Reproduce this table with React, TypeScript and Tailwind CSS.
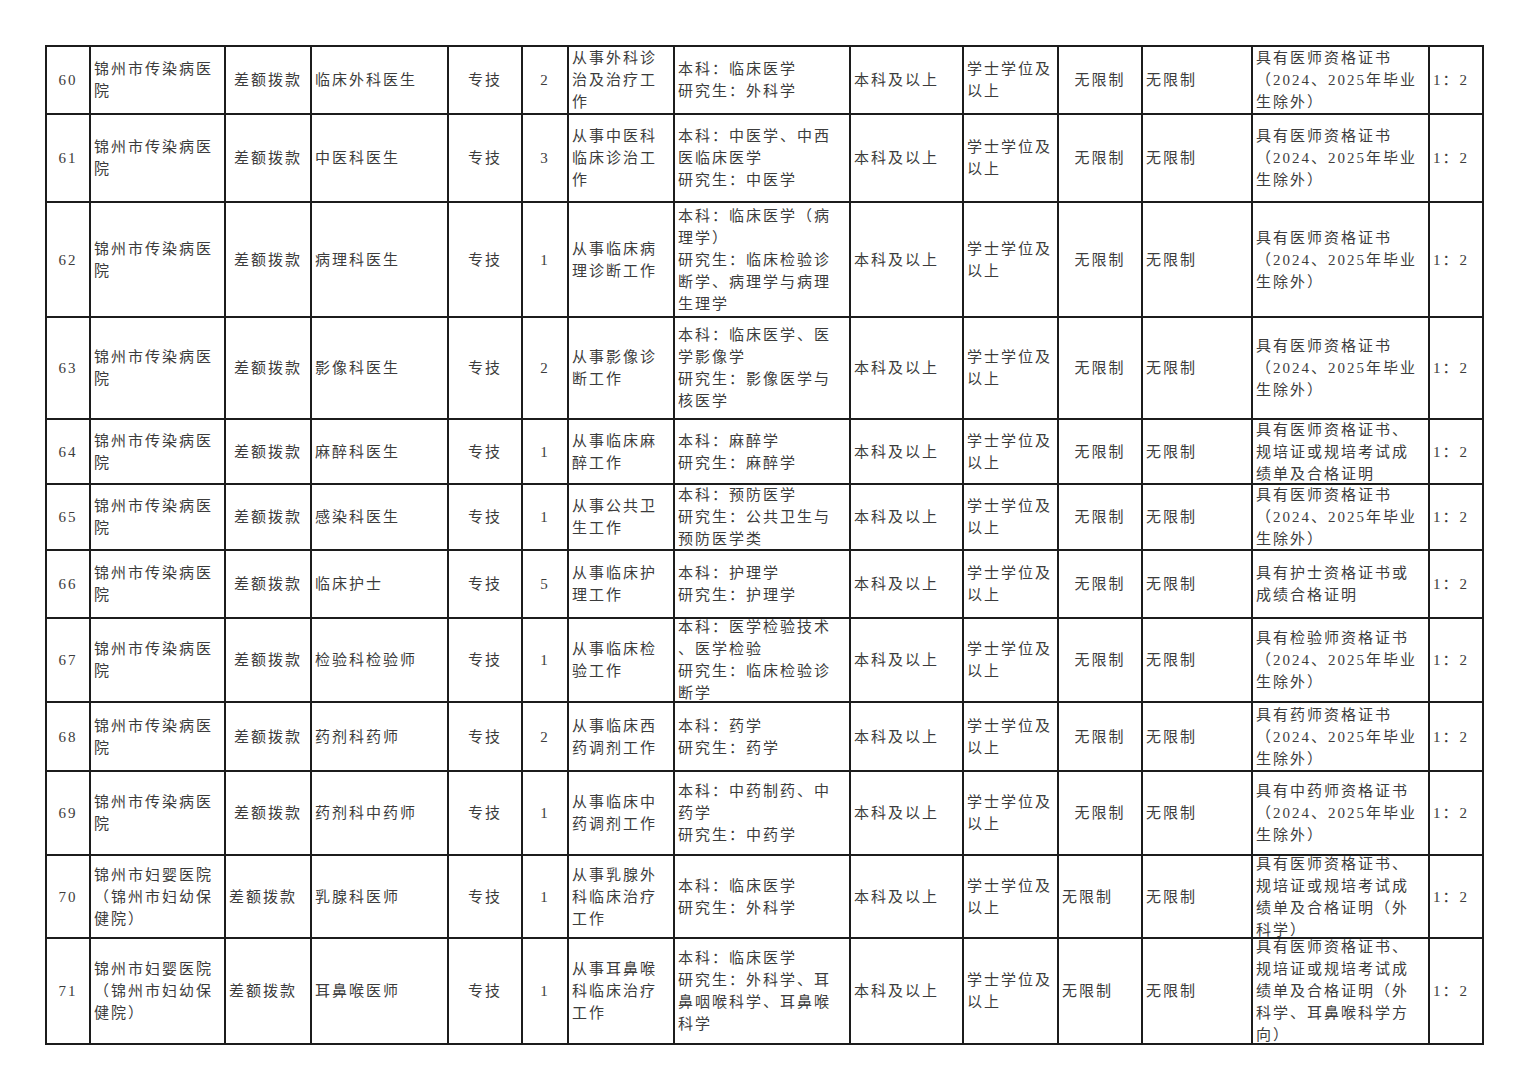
import React from 'react';

type Align = 'left' | 'center';

const colWidths = [42, 135, 86, 137, 74, 46, 106, 176, 113, 95, 84, 110, 177, 54];
const colAlign: Align[] = ['center', 'left', 'center', 'left', 'center', 'center', 'left', 'left', 'left', 'left', 'center', 'left', 'left', 'left'];

const HOSP = ['锦州市传染病医', '院'];
const HOSP2 = ['锦州市妇婴医院', '（锦州市妇幼保', '健院）'];
const DEG = ['学士学位及', '以上'];
const CERT = ['具有医师资格证书', '（2024、2025年毕业', '生除外）'];

interface Row {
  h: number;
  cells: string[][];
  leftCols?: number[];
}

const rows: Row[] = [
  {
    h: 66,
    cells: [['60'], HOSP, ['差额拨款'], ['临床外科医生'], ['专技'], ['2'], ['从事外科诊', '治及治疗工', '作'], ['本科：临床医学', '研究生：外科学'], ['本科及以上'], DEG, ['无限制'], ['无限制'], CERT, ['1：2']],
  },
  {
    h: 88,
    cells: [['61'], HOSP, ['差额拨款'], ['中医科医生'], ['专技'], ['3'], ['从事中医科', '临床诊治工', '作'], ['本科：中医学、中西', '医临床医学', '研究生：中医学'], ['本科及以上'], DEG, ['无限制'], ['无限制'], CERT, ['1：2']],
  },
  {
    h: 115,
    cells: [['62'], HOSP, ['差额拨款'], ['病理科医生'], ['专技'], ['1'], ['从事临床病', '理诊断工作'], ['本科：临床医学（病', '理学）', '研究生：临床检验诊', '断学、病理学与病理', '生理学'], ['本科及以上'], DEG, ['无限制'], ['无限制'], CERT, ['1：2']],
  },
  {
    h: 102,
    cells: [['63'], HOSP, ['差额拨款'], ['影像科医生'], ['专技'], ['2'], ['从事影像诊', '断工作'], ['本科：临床医学、医', '学影像学', '研究生：影像医学与', '核医学'], ['本科及以上'], DEG, ['无限制'], ['无限制'], CERT, ['1：2']],
  },
  {
    h: 65,
    cells: [['64'], HOSP, ['差额拨款'], ['麻醉科医生'], ['专技'], ['1'], ['从事临床麻', '醉工作'], ['本科：麻醉学', '研究生：麻醉学'], ['本科及以上'], DEG, ['无限制'], ['无限制'], ['具有医师资格证书、', '规培证或规培考试成', '绩单及合格证明'], ['1：2']],
  },
  {
    h: 66,
    cells: [['65'], HOSP, ['差额拨款'], ['感染科医生'], ['专技'], ['1'], ['从事公共卫', '生工作'], ['本科：预防医学', '研究生：公共卫生与', '预防医学类'], ['本科及以上'], DEG, ['无限制'], ['无限制'], CERT, ['1：2']],
  },
  {
    h: 68,
    cells: [['66'], HOSP, ['差额拨款'], ['临床护士'], ['专技'], ['5'], ['从事临床护', '理工作'], ['本科：护理学', '研究生：护理学'], ['本科及以上'], DEG, ['无限制'], ['无限制'], ['具有护士资格证书或', '成绩合格证明'], ['1：2']],
  },
  {
    h: 84,
    cells: [['67'], HOSP, ['差额拨款'], ['检验科检验师'], ['专技'], ['1'], ['从事临床检', '验工作'], ['本科：医学检验技术', '、医学检验', '研究生：临床检验诊', '断学'], ['本科及以上'], DEG, ['无限制'], ['无限制'], ['具有检验师资格证书', '（2024、2025年毕业', '生除外）'], ['1：2']],
  },
  {
    h: 69,
    cells: [['68'], HOSP, ['差额拨款'], ['药剂科药师'], ['专技'], ['2'], ['从事临床西', '药调剂工作'], ['本科：药学', '研究生：药学'], ['本科及以上'], DEG, ['无限制'], ['无限制'], ['具有药师资格证书', '（2024、2025年毕业', '生除外）'], ['1：2']],
  },
  {
    h: 84,
    cells: [['69'], HOSP, ['差额拨款'], ['药剂科中药师'], ['专技'], ['1'], ['从事临床中', '药调剂工作'], ['本科：中药制药、中', '药学', '研究生：中药学'], ['本科及以上'], DEG, ['无限制'], ['无限制'], ['具有中药师资格证书', '（2024、2025年毕业', '生除外）'], ['1：2']],
  },
  {
    h: 83,
    leftCols: [2, 10],
    cells: [['70'], HOSP2, ['差额拨款'], ['乳腺科医师'], ['专技'], ['1'], ['从事乳腺外', '科临床治疗', '工作'], ['本科：临床医学', '研究生：外科学'], ['本科及以上'], DEG, ['无限制'], ['无限制'], ['具有医师资格证书、', '规培证或规培考试成', '绩单及合格证明（外', '科学）'], ['1：2']],
  },
  {
    h: 106,
    leftCols: [2, 10],
    cells: [['71'], HOSP2, ['差额拨款'], ['耳鼻喉医师'], ['专技'], ['1'], ['从事耳鼻喉', '科临床治疗', '工作'], ['本科：临床医学', '研究生：外科学、耳', '鼻咽喉科学、耳鼻喉', '科学'], ['本科及以上'], DEG, ['无限制'], ['无限制'], ['具有医师资格证书、', '规培证或规培考试成', '绩单及合格证明（外', '科学、耳鼻喉科学方', '向）'], ['1：2']],
  },
];

function Cell({ lines, align, first, width }: { lines: string[]; align: Align; first: boolean; width: number }) {
  return (
    <div
      className={`flex flex-col justify-center px-[3px] overflow-visible ${first ? '' : 'border-l-2 border-[#1c1c1c]'} ${align === 'center' ? 'items-center text-center' : 'items-start text-left'}`}
      style={{ width }}
    >
      {lines.map((l, i) => (
        <div key={i} className="whitespace-nowrap leading-[22px]">
          {l}
        </div>
      ))}
    </div>
  );
}

export default function App() {
  return (
    <div className="w-[1529px] h-[1080px] bg-white overflow-hidden">
      <div className="ml-[45px] mt-[45px] w-[1439px] border-2 border-[#1c1c1c] font-['Liberation_Serif','Noto_Sans_CJK_SC',serif] text-[15px] tracking-[2px] text-[#3c3c3c]">
        {rows.map((row, ri) => (
          <div
            key={ri}
            className={`flex ${ri === 0 ? '' : 'border-t-2 border-[#1c1c1c]'}`}
            style={{ height: row.h }}
          >
            {row.cells.map((lines, ci) => {
              const align: Align = row.leftCols?.includes(ci) ? 'left' : colAlign[ci];
              return <Cell key={ci} lines={lines} align={align} first={ci === 0} width={colWidths[ci]} />;
            })}
          </div>
        ))}
      </div>
    </div>
  );
}
